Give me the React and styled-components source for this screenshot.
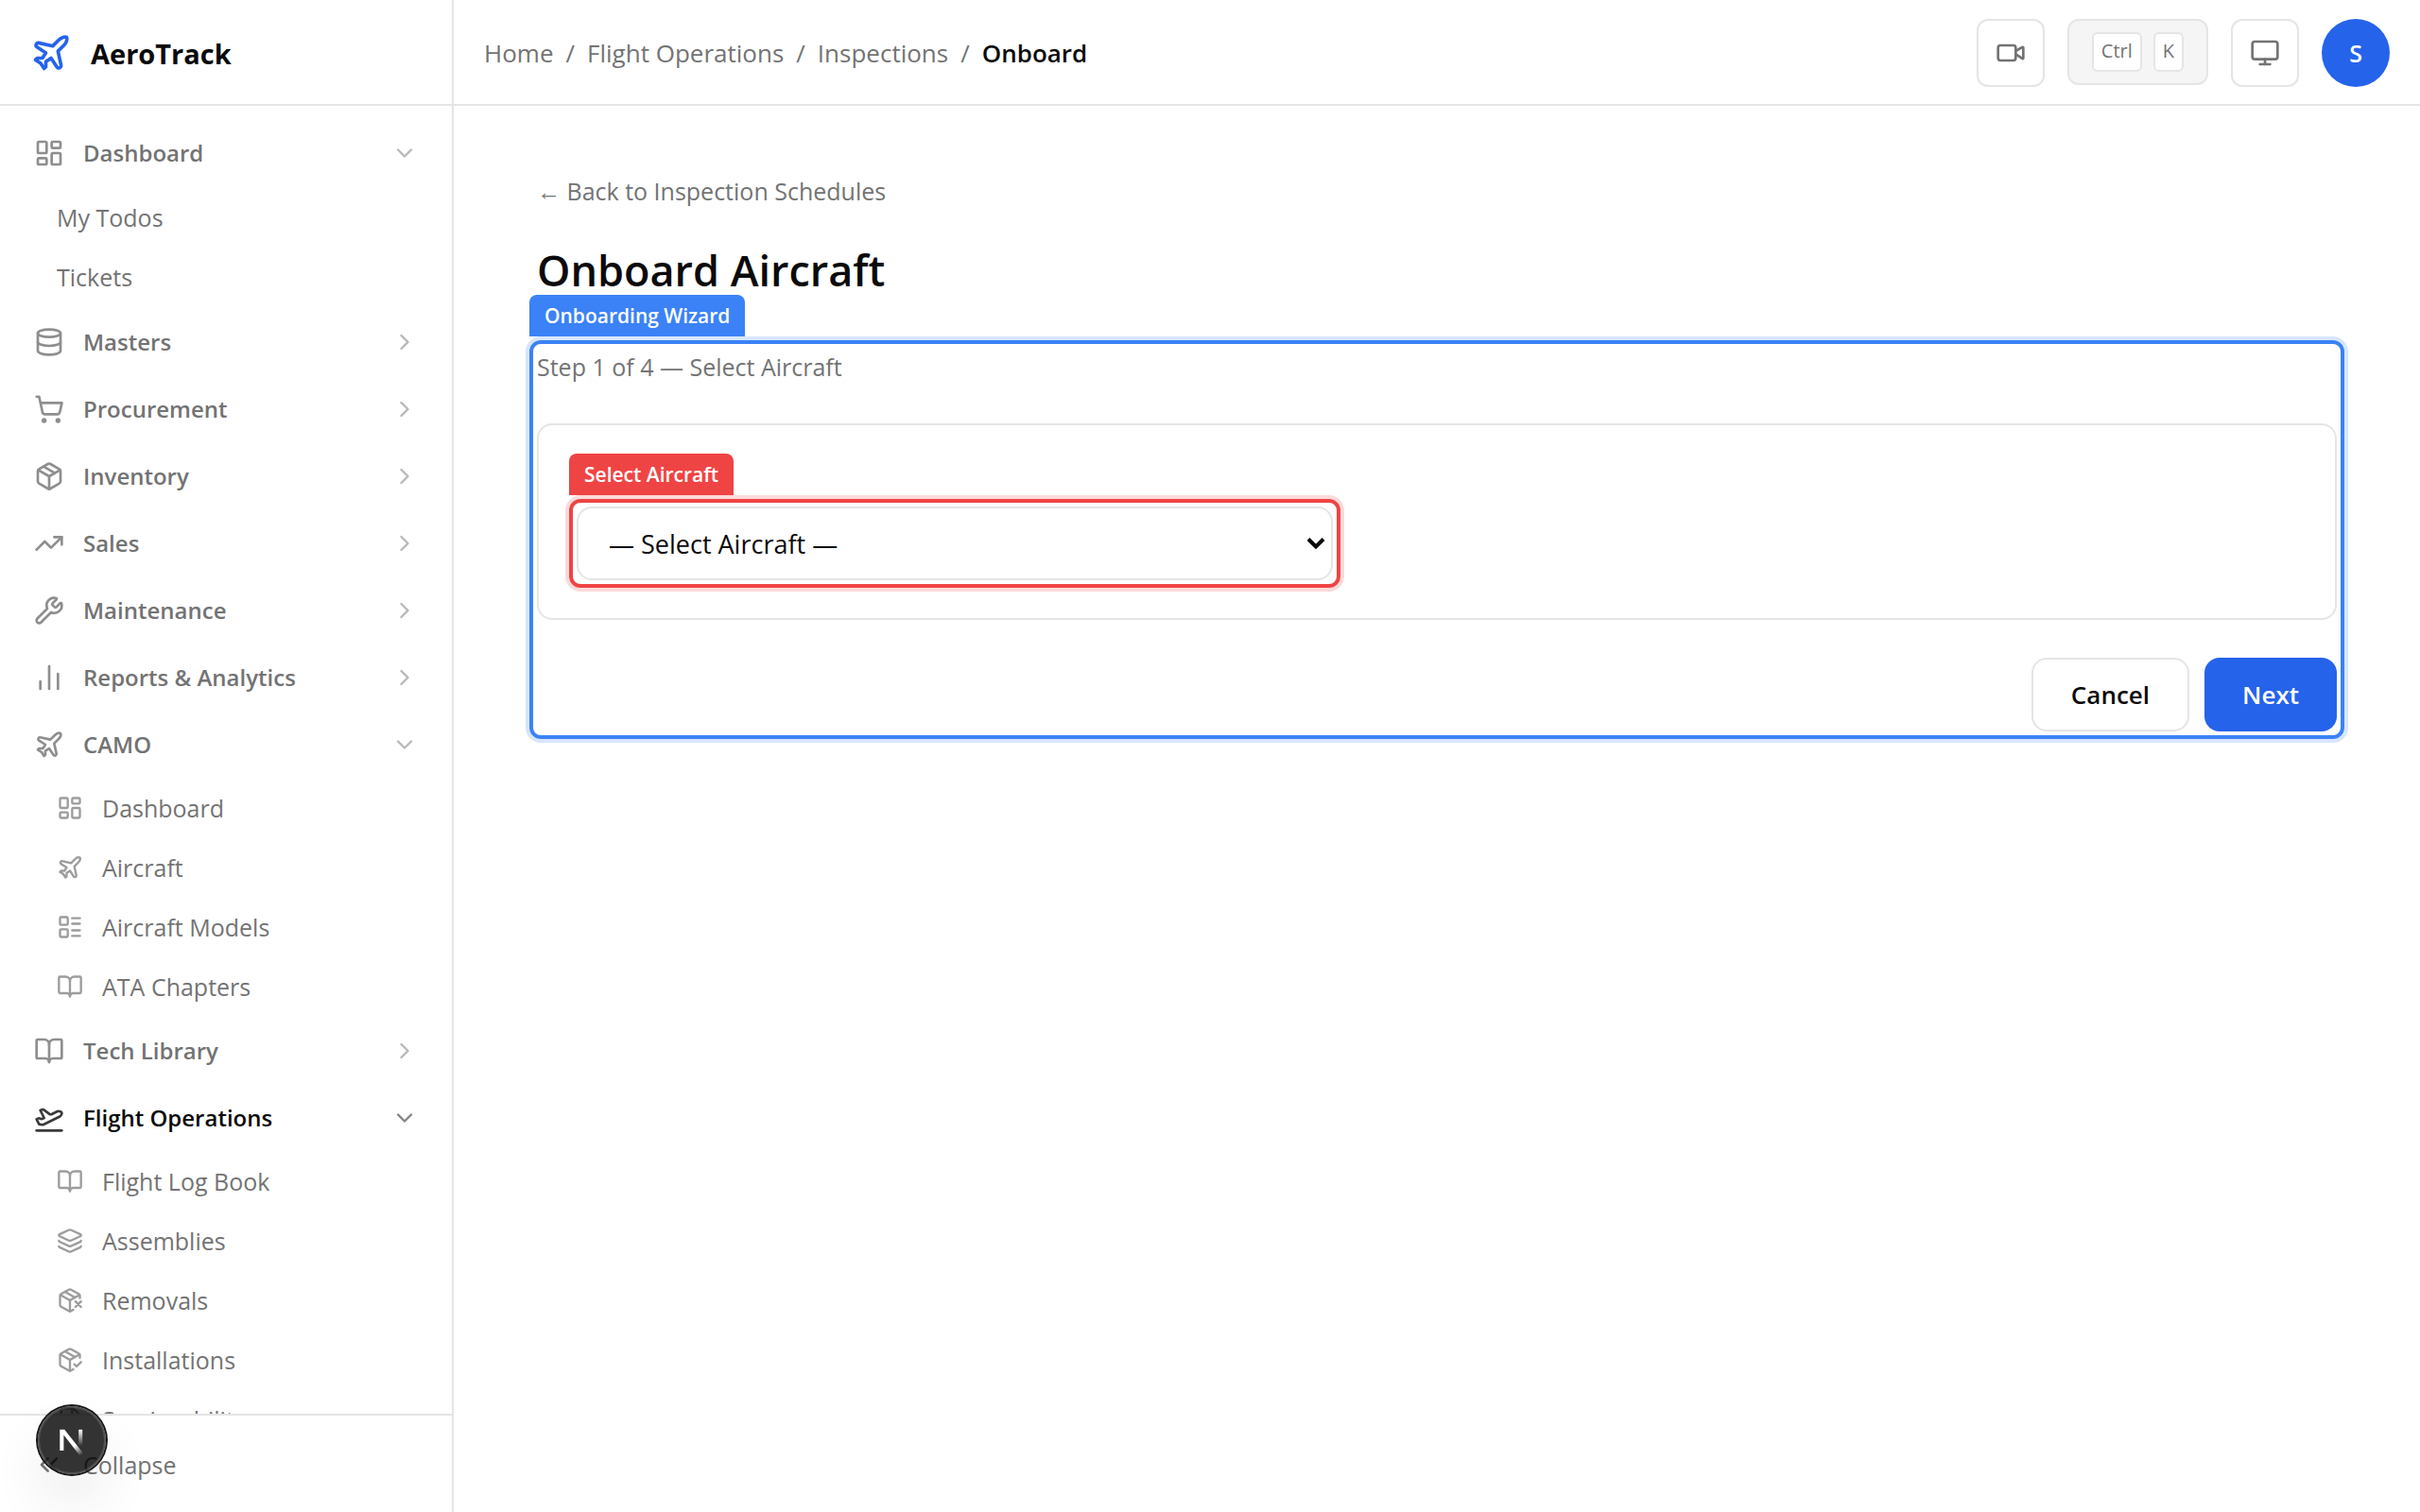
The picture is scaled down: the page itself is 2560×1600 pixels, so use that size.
import React, { useState } from 'react';
import styled, { createGlobalStyle } from 'styled-components';
import {
  BookOpen,
  ChartNoAxesColumn,
  ChevronDown,
  ChevronRight,
  ChevronsLeft,
  Database,
  FileCheck,
  Layers,
  LayoutDashboard,
  LayoutList,
  Monitor,
  Package,
  PackageCheck,
  PackageX,
  Plane,
  PlaneTakeoff,
  ShoppingCart,
  TrendingUp,
  Video,
  Wrench,
} from 'lucide-react';

const GlobalStyle = createGlobalStyle`
  *, *::before, *::after {
    box-sizing: border-box;
  }

  body {
    margin: 0;
    background: #ffffff;
    color: #0a0a0a;
    font-family: 'Segoe UI', 'Open Sans', 'Noto Sans', sans-serif;
    font-size: 25px;
  }

  button, select {
    font: inherit;
    color: inherit;
    margin: 0;
  }

  a {
    color: inherit;
    text-decoration: none;
  }
`;

const Shell = styled.div`
  display: flex;
  height: 100vh;
  overflow: hidden;
`;

/* ---------- sidebar ---------- */

const Sidebar = styled.aside`
  display: flex;
  flex-direction: column;
  flex: 0 0 480px;
  border-right: 2px solid #e5e5e5;
`;

const Brand = styled.a`
  display: flex;
  align-items: center;
  gap: 20px;
  flex: 0 0 112px;
  padding: 2px 32px 0;
  border-bottom: 2px solid #e5e5e5;
  font-size: 29px;
  font-weight: 700;

  svg {
    color: #2563eb;
  }
`;

const Nav = styled.nav`
  display: flex;
  flex-direction: column;
  gap: 4px;
  flex: 1 1 0;
  min-height: 0;
  overflow: hidden;
  padding-top: 16px;
`;

const Group = styled.div`
  display: flex;
  flex-direction: column;
  flex: none;
  gap: 4px;
`;

const GroupButton = styled.button`
  display: flex;
  align-items: center;
  gap: 20px;
  height: 67px;
  padding: 0 36px;
  border: 0;
  background: none;
  color: ${({ $active }) => ($active ? '#0a0a0a' : '#737373')};
  font-size: 24px;
  font-weight: 600;
  text-align: left;
  cursor: pointer;

  span {
    flex: 1;
  }

  svg:first-child {
    opacity: 0.8;
  }

  svg:last-child {
    opacity: 0.5;
  }
`;

const SubList = styled.ul`
  display: flex;
  flex-direction: column;
  gap: 4px;
  margin: 0;
  padding: ${({ $plain }) => ($plain ? '1px 0 2px' : '0 0 1px')};
  list-style: none;
`;

const SubLink = styled.a`
  display: flex;
  align-items: center;
  gap: 20px;
  height: 59px;
  padding: 0 36px 0 60px;
  color: #737373;

  svg {
    opacity: 0.7;
  }
`;

const CollapseButton = styled.button`
  display: flex;
  align-items: center;
  gap: 20px;
  flex: 0 0 104px;
  padding: 2px 36px 0;
  border: 0;
  border-top: 2px solid #e5e5e5;
  background: none;
  color: #737373;
  cursor: pointer;
`;

/* ---------- top bar ---------- */

const Column = styled.div`
  display: flex;
  flex-direction: column;
  flex: 1;
  min-width: 0;
`;

const TopBar = styled.header`
  display: flex;
  align-items: flex-start;
  justify-content: space-between;
  flex: 0 0 112px;
  padding: 20px 32px 0;
  border-bottom: 2px solid #e5e5e5;
`;

const Breadcrumbs = styled.nav`
  display: flex;
  align-items: center;
  gap: 13px;
  height: 72px;
  color: #737373;
  font-size: 26px;

  strong {
    color: #0a0a0a;
    font-weight: 600;
  }
`;

const Actions = styled.div`
  display: flex;
  align-items: flex-start;
  gap: 24px;
`;

const IconButton = styled.button`
  display: flex;
  align-items: center;
  justify-content: center;
  width: 72px;
  height: 72px;
  padding: 0;
  border: 2px solid #e5e5e5;
  border-radius: 12px;
  background: #ffffff;
  color: #737373;
  cursor: pointer;
`;

const ShortcutButton = styled.button`
  display: flex;
  align-items: center;
  gap: 12px;
  height: 70px;
  padding: 0 24px;
  border: 2px solid #e5e5e5;
  border-radius: 12px;
  background: #f5f5f5;
  color: #737373;
  cursor: pointer;
`;

const Key = styled.kbd`
  height: 42px;
  padding: 0 8px;
  border: 2px solid #e5e5e5;
  border-radius: 6px;
  background: #ffffff;
  font-family: inherit;
  font-size: 20px;
  line-height: 36px;
`;

const Avatar = styled.button`
  width: 72px;
  height: 72px;
  padding: 0;
  border: 0;
  border-radius: 50%;
  background: #2563eb;
  color: #ffffff;
  font-weight: 600;
  cursor: pointer;
`;

/* ---------- page ---------- */

const Page = styled.main`
  flex: 1;
  padding: 70px 80px;
`;

const PageHead = styled.div`
  padding: 0 8px;
`;

const BackLink = styled.a`
  display: block;
  color: #737373;
  line-height: 40px;
`;

const Title = styled.h1`
  margin: 38px 0 0;
  font-size: 45px;
  font-weight: 600;
  line-height: 52px;
`;

const Tag = styled.span`
  display: block;
  width: fit-content;
  height: 44px;
  margin-bottom: 4px;
  padding: 0 16px;
  border-radius: 8px 8px 0 0;
  background: ${({ $color }) => $color};
  color: #ffffff;
  font-size: 21px;
  font-weight: 600;
  line-height: 44px;
`;

const Ring = styled.div`
  padding: 4px;
  border: 4px solid ${({ $color }) => $color};
  border-radius: 12px;
  box-shadow: 0 0 0 4px ${({ $glow }) => $glow};
`;

const StepText = styled.p`
  margin: 0 0 40px;
  color: #737373;
  line-height: 40px;
`;

const Card = styled.section`
  padding: 30px 32px 32px;
  border: 2px solid #e5e5e5;
  border-radius: 16px;
`;

const Field = styled.div`
  max-width: 816px;
`;

const SelectBox = styled.div`
  display: grid;
  align-items: center;

  > * {
    grid-area: 1 / 1;
  }

  svg {
    justify-self: end;
    margin-right: 8px;
    pointer-events: none;
  }
`;

const Select = styled.select`
  appearance: none;
  width: 100%;
  height: 78px;
  padding: 0 44px 0 32px;
  border: 2px solid #e5e5e5;
  border-radius: 16px;
  background: #ffffff;
  font-size: 27px;
`;

const Footer = styled.div`
  display: flex;
  justify-content: flex-end;
  gap: 16px;
  margin-top: 40px;
`;

const Button = styled.button`
  height: 78px;
  padding: 0 40px;
  border: ${({ $primary }) => ($primary ? '0' : '2px solid #e5e5e5')};
  border-radius: 16px;
  background: ${({ $primary }) => ($primary ? '#2563eb' : '#ffffff')};
  color: ${({ $primary }) => ($primary ? '#ffffff' : '#0a0a0a')};
  font-size: 26px;
  font-weight: 600;
  cursor: pointer;
`;

/* floats over the sidebar in the bottom left corner */
const DevBadge = styled.button`
  position: fixed;
  left: 40px;
  bottom: 40px;
  width: 72px;
  height: 72px;
  padding: 0;
  border: 0;
  border-radius: 50%;
  background: rgba(0, 0, 0, 0.8);
  box-shadow:
    0 0 0 2px #171717,
    inset 0 0 0 2px rgba(255, 255, 255, 0.14),
    0 32px 64px -16px rgba(0, 0, 0, 0.24);
  cursor: pointer;

  svg {
    display: block;
  }
`;

const menu = [
  {
    label: 'Dashboard',
    icon: LayoutDashboard,
    open: true,
    plain: true,
    items: [{ label: 'My Todos' }, { label: 'Tickets' }],
  },
  { label: 'Masters', icon: Database },
  { label: 'Procurement', icon: ShoppingCart },
  { label: 'Inventory', icon: Package },
  { label: 'Sales', icon: TrendingUp },
  { label: 'Maintenance', icon: Wrench },
  { label: 'Reports & Analytics', icon: ChartNoAxesColumn },
  {
    label: 'CAMO',
    icon: Plane,
    open: true,
    items: [
      { label: 'Dashboard', icon: LayoutDashboard },
      { label: 'Aircraft', icon: Plane },
      { label: 'Aircraft Models', icon: LayoutList },
      { label: 'ATA Chapters', icon: BookOpen },
    ],
  },
  { label: 'Tech Library', icon: BookOpen },
  {
    label: 'Flight Operations',
    icon: PlaneTakeoff,
    open: true,
    active: true,
    items: [
      { label: 'Flight Log Book', icon: BookOpen },
      { label: 'Assemblies', icon: Layers },
      { label: 'Removals', icon: PackageX },
      { label: 'Installations', icon: PackageCheck },
      { label: 'Serviceability', icon: FileCheck },
    ],
  },
];

function NavGroup({ group }) {
  const [open, setOpen] = useState(Boolean(group.open));
  const Icon = group.icon;
  const Chevron = open ? ChevronDown : ChevronRight;

  return (
    <Group>
      <GroupButton
        type="button"
        $active={group.active}
        aria-expanded={open}
        onClick={() => setOpen(!open)}
      >
        <Icon size={32} />
        <span>{group.label}</span>
        <Chevron size={28} />
      </GroupButton>
      {open && group.items && (
        <SubList $plain={group.plain}>
          {group.items.map((item) => (
            <li key={item.label}>
              <SubLink href="#">
                {item.icon && <item.icon size={28} />}
                {item.label}
              </SubLink>
            </li>
          ))}
        </SubList>
      )}
    </Group>
  );
}

function DevLogo() {
  return (
    <svg width="72" height="72" viewBox="0 0 72 72" fill="none" aria-hidden="true">
      <defs>
        <linearGradient id="diag" gradientUnits="userSpaceOnUse" x1="39" y1="42" x2="46" y2="52">
          <stop stopColor="#fff" />
          <stop offset="1" stopColor="#fff" stopOpacity="0" />
        </linearGradient>
        <linearGradient id="stem" gradientUnits="userSpaceOnUse" x1="45" y1="25" x2="45" y2="42">
          <stop stopColor="#fff" />
          <stop offset="1" stopColor="#fff" stopOpacity="0" />
        </linearGradient>
      </defs>
      <path d="M23.3 24.8 H28.2 L48 49.8 L44.6 52.4 L27.4 30.6 V47 H23.3 Z" fill="url(#diag)" />
      <path d="M45.2 24.8 V42" stroke="url(#stem)" strokeWidth="4" />
    </svg>
  );
}

function App() {
  return (
    <>
      <GlobalStyle />
      <Shell>
        <Sidebar>
          <Brand href="#">
            <Plane size={44} />
            AeroTrack
          </Brand>
          <Nav aria-label="Main">
            {menu.map((group) => (
              <NavGroup key={group.label} group={group} />
            ))}
          </Nav>
          <CollapseButton type="button">
            <ChevronsLeft size={32} />
            Collapse
          </CollapseButton>
        </Sidebar>

        <Column>
          <TopBar>
            <Breadcrumbs aria-label="Breadcrumb">
              <a href="#">Home</a>
              <span>/</span>
              <a href="#">Flight Operations</a>
              <span>/</span>
              <a href="#">Inspections</a>
              <span>/</span>
              <strong>Onboard</strong>
            </Breadcrumbs>
            <Actions>
              <IconButton type="button" aria-label="Record">
                <Video size={32} />
              </IconButton>
              <ShortcutButton type="button">
                <Key>Ctrl</Key>
                <Key>K</Key>
              </ShortcutButton>
              <IconButton type="button" aria-label="Theme">
                <Monitor size={32} />
              </IconButton>
              <Avatar type="button">S</Avatar>
            </Actions>
          </TopBar>

          <Page>
            <PageHead>
              <BackLink href="#">← Back to Inspection Schedules</BackLink>
              <Title>Onboard Aircraft</Title>
            </PageHead>

            <Tag $color="#3b82f6">Onboarding Wizard</Tag>
            <Ring $color="#3b82f6" $glow="rgba(59, 130, 246, 0.2)">
              <StepText>Step 1 of 4 — Select Aircraft</StepText>
              <Card>
                <Field>
                  <Tag as="label" htmlFor="aircraft" $color="#ef4444">
                    Select Aircraft
                  </Tag>
                  <Ring $color="#ef4444" $glow="rgba(239, 68, 68, 0.2)">
                    <SelectBox>
                      <Select id="aircraft" defaultValue="">
                        <option value="">— Select Aircraft —</option>
                      </Select>
                      <svg width="20" height="14" viewBox="0 0 20 14" fill="none" aria-hidden="true">
                        <path d="M2 2.5 L10 10.5 L18 2.5" stroke="#0a0a0a" strokeWidth="4" />
                      </svg>
                    </SelectBox>
                  </Ring>
                </Field>
              </Card>
              <Footer>
                <Button type="button">Cancel</Button>
                <Button type="button" $primary>
                  Next
                </Button>
              </Footer>
            </Ring>
          </Page>
        </Column>
      </Shell>
      <DevBadge type="button" aria-label="Open dev tools">
        <DevLogo />
      </DevBadge>
    </>
  );
}

export default App;
